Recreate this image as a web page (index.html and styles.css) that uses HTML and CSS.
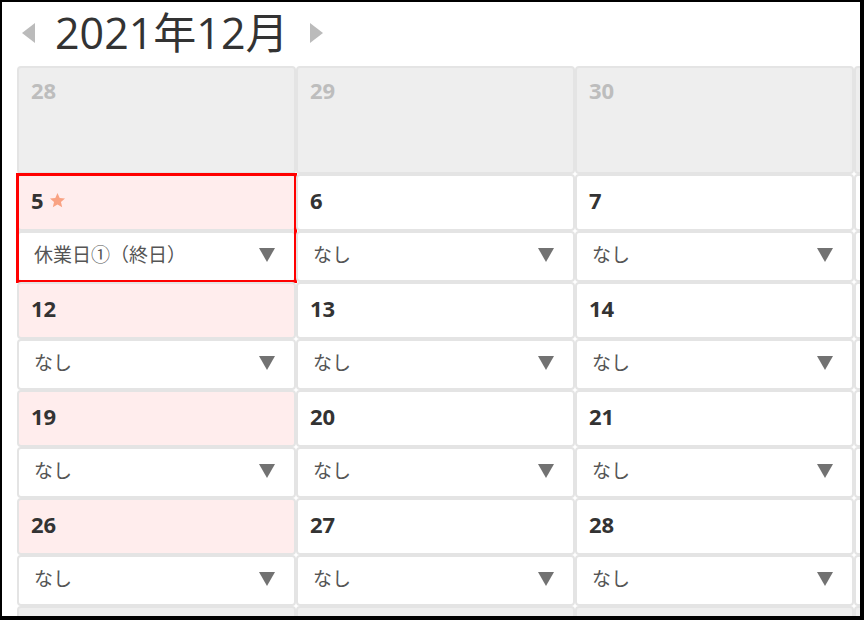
FILE: index.html
```html
<!DOCTYPE html>
<html lang="ja">
<head>
  <meta charset="UTF-8" />
  <title>2021年12月</title>
  <link rel="stylesheet" href="styles.css">
</head>
<body>
  <div class="frame">
    <div class="month-nav">
      <span class="nav-arrow prev"></span>
      <h1 class="month-title">2021年12月</h1>
      <span class="nav-arrow next"></span>
    </div>

    <div class="calendar">
      <!-- 前月 -->
      <div class="day other"><div class="date">28</div></div>
      <div class="day other"><div class="date">29</div></div>
      <div class="day other"><div class="date">30</div></div>
      <div class="day other"><div class="date"></div></div>

      <div class="day sunday marked">
        <div class="date">5
          <svg class="star" width="17" height="17" viewBox="0 0 24 24"><path d="M12 1.5l3.1 7 7.5.7-5.7 5 1.7 7.4L12 17.7l-6.6 3.9 1.7-7.4-5.7-5 7.5-.7z"/></svg>
        </div>
        <div class="pick">休業日①（終日）<span class="caret"></span></div>
      </div>
      <div class="day"><div class="date">6</div><div class="pick">なし<span class="caret"></span></div></div>
      <div class="day"><div class="date">7</div><div class="pick">なし<span class="caret"></span></div></div>
      <div class="day"><div class="date"></div><div class="pick"></div></div>

      <div class="day sunday"><div class="date">12</div><div class="pick">なし<span class="caret"></span></div></div>
      <div class="day"><div class="date">13</div><div class="pick">なし<span class="caret"></span></div></div>
      <div class="day"><div class="date">14</div><div class="pick">なし<span class="caret"></span></div></div>
      <div class="day"><div class="date"></div><div class="pick"></div></div>

      <div class="day sunday"><div class="date">19</div><div class="pick">なし<span class="caret"></span></div></div>
      <div class="day"><div class="date">20</div><div class="pick">なし<span class="caret"></span></div></div>
      <div class="day"><div class="date">21</div><div class="pick">なし<span class="caret"></span></div></div>
      <div class="day"><div class="date"></div><div class="pick"></div></div>

      <div class="day sunday"><div class="date">26</div><div class="pick">なし<span class="caret"></span></div></div>
      <div class="day"><div class="date">27</div><div class="pick">なし<span class="caret"></span></div></div>
      <div class="day"><div class="date">28</div><div class="pick">なし<span class="caret"></span></div></div>
      <div class="day"><div class="date"></div><div class="pick"></div></div>

      <div class="day other"><div class="date"></div></div>
      <div class="day other"><div class="date"></div></div>
      <div class="day other"><div class="date"></div></div>
      <div class="day other"><div class="date"></div></div>
    </div>
  </div>
</body>
</html>
```

FILE: styles.css
```css
* {
  box-sizing: border-box;
}

body {
  margin: 0;
  background: #fff;
  font-family: 'Open Sans', 'Noto Sans CJK JP', sans-serif;
  color: #333;
}

.frame {
  width: 864px;
  height: 620px;
  border-style: solid;
  border-color: #000;
  border-width: 2px 4px 4px 2px;
  overflow: hidden;
  background: #fff;
}

.month-nav {
  display: flex;
  align-items: center;
  height: 61px;
  padding-left: 20px;
}

.month-title {
  margin: 0 0 0 20px;
  font-size: 43px;
  font-weight: normal;
  color: #333;
  line-height: 1;
}

.nav-arrow {
  width: 0;
  height: 0;
  border-top: 10px solid transparent;
  border-bottom: 10px solid transparent;
}

.nav-arrow.prev {
  border-right: 13px solid #bbb;
}

.nav-arrow.next {
  margin-left: 21px;
  border-left: 13px solid #bbb;
}

.calendar {
  display: grid;
  grid-template-columns: repeat(4, 279px);
  grid-auto-rows: 108px;
  margin-left: 15px;
  margin-top: 3px;
}

.day {
  display: flex;
  flex-direction: column;
}

.date {
  display: flex;
  align-items: center;
  gap: 5px;
  height: 57px;
  padding: 0 0 5px 12px;
  border: 2px solid #e4e4e4;
  border-radius: 4px;
  background: #fff;
  font-size: 22px;
  line-height: 1.4;
  font-weight: bold;
  color: #333;
}

.day.other .date {
  height: 108px;
  align-items: flex-start;
  padding-top: 7px;
  background: #eee;
  color: #bdbdbd;
}

.day.sunday .date {
  background: #ffeded;
}

.star {
  fill: #f9a283;
}

.pick {
  display: flex;
  align-items: center;
  justify-content: space-between;
  height: 51px;
  padding: 0 19px 6px 15px;
  border: 2px solid #e4e4e4;
  border-radius: 4px;
  background: #fff;
  font-family: 'Noto Sans CJK JP', sans-serif;
  font-size: 19px;
  color: #555;
}

.caret {
  width: 0;
  height: 0;
  margin-top: 2px;
  border-left: 8px solid transparent;
  border-right: 8px solid transparent;
  border-top: 14px solid #727272;
}

.day.marked {
  outline: 3px solid #f00;
  outline-offset: -2px;
}
```
